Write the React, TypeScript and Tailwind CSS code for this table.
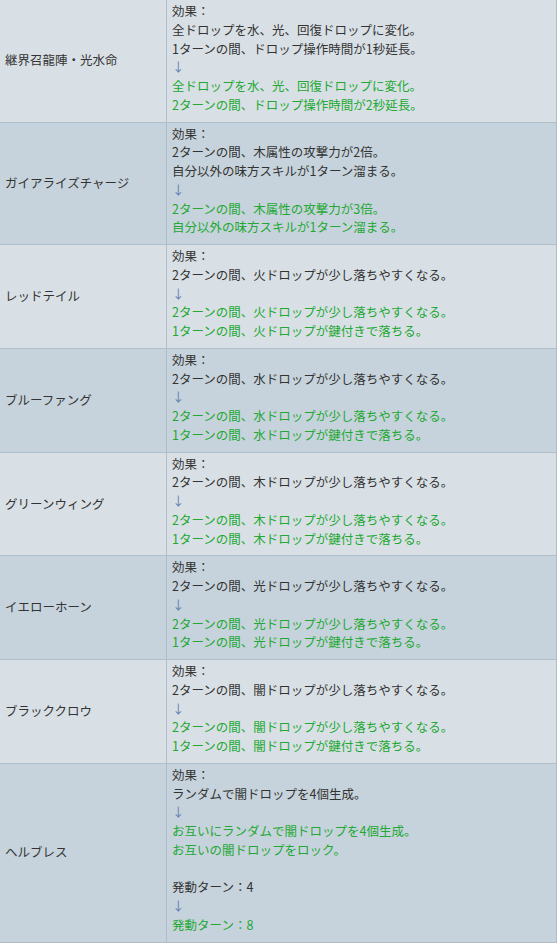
import React from "react";

type Line = { t: string; c: "k" | "a" | "g" | "b" };

const k = (t: string): Line => ({ t, c: "k" });
const g = (t: string): Line => ({ t, c: "g" });
const a: Line = { t: "↓", c: "a" };
const b: Line = { t: "\u00a0", c: "b" };

const rows: { name: string; lines: Line[] }[] = [
  {
    name: "継界召龍陣・光水命",
    lines: [
      k("効果："),
      k("全ドロップを水、光、回復ドロップに変化。"),
      k("1ターンの間、ドロップ操作時間が1秒延長。"),
      a,
      g("全ドロップを水、光、回復ドロップに変化。"),
      g("2ターンの間、ドロップ操作時間が2秒延長。"),
    ],
  },
  {
    name: "ガイアライズチャージ",
    lines: [
      k("効果："),
      k("2ターンの間、木属性の攻撃力が2倍。"),
      k("自分以外の味方スキルが1ターン溜まる。"),
      a,
      g("2ターンの間、木属性の攻撃力が3倍。"),
      g("自分以外の味方スキルが1ターン溜まる。"),
    ],
  },
  ...(["火", "水", "木", "光", "闇"] as const).map((el, i) => ({
    name: ["レッドテイル", "ブルーファング", "グリーンウィング", "イエローホーン", "ブラッククロウ"][i],
    lines: [
      k("効果："),
      k(`2ターンの間、${el}ドロップが少し落ちやすくなる。`),
      a,
      g(`2ターンの間、${el}ドロップが少し落ちやすくなる。`),
      g(`1ターンの間、${el}ドロップが鍵付きで落ちる。`),
    ],
  })),
  {
    name: "ヘルブレス",
    lines: [
      k("効果："),
      k("ランダムで闇ドロップを4個生成。"),
      a,
      g("お互いにランダムで闇ドロップを4個生成。"),
      g("お互いの闇ドロップをロック。"),
      b,
      k("発動ターン：4"),
      a,
      g("発動ターン：8"),
    ],
  },
];

const colorClass: Record<Line["c"], string> = {
  k: "text-[#333333]",
  a: "text-[#5b80b2]",
  g: "text-[#22a833]",
  b: "text-[#333333]",
};

export default function App() {
  return (
    <div
      className="w-[559px] min-h-[945px] bg-white"
      style={{ fontFamily: '"Noto Sans CJK JP", "Noto Sans", sans-serif' }}
    >
      <div className="w-[557px]">
        {rows.map((r, i) => (
          <div
            key={i}
            className={`flex border-b border-[#afbecb] ${i % 2 === 0 ? "bg-[#d9e0e5]" : "bg-[#c7d3dc]"}`}
          >
            <div className="w-[167px] shrink-0 flex items-center pl-[5px] border-r border-[#afbecb] text-[12.5px] text-[#333333]">
              {r.name}
            </div>
            <div className="flex-1 pl-[5px] pt-[2px] pb-[7px] border-r border-[#afbecb] text-[12.5px] leading-[18.75px]">
              {r.lines.map((l, j) => (
                <div key={j} className={colorClass[l.c]}>
                  {l.t}
                </div>
              ))}
            </div>
          </div>
        ))}
      </div>
    </div>
  );
}
